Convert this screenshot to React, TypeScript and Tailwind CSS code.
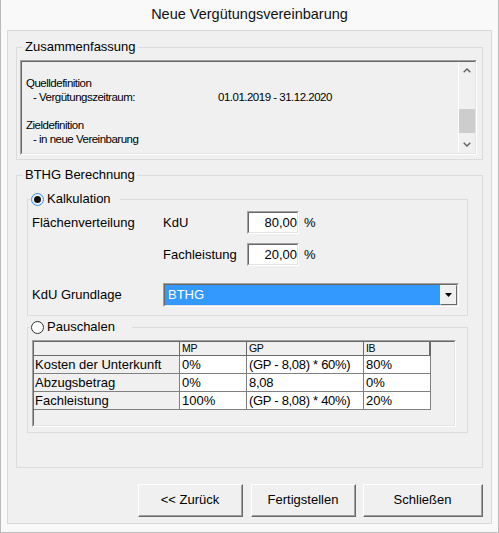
import React from "react";

const Sunken = ({
  className = "",
  innerClassName = "",
  children,
}: {
  className?: string;
  innerClassName?: string;
  children?: React.ReactNode;
}) => (
  <div
    className={
      "border-t border-l border-b border-r border-t-[#a0a0a0] border-l-[#a0a0a0] border-b-white border-r-white " +
      className
    }
  >
    <div
      className={
        "h-full border-t border-l border-b border-r border-t-[#696969] border-l-[#696969] border-b-[#e3e3e3] border-r-[#e3e3e3] " +
        innerClassName
      }
    >
      {children}
    </div>
  </div>
);

const Btn = ({ className = "", children }: { className?: string; children: React.ReactNode }) => (
  <div
    className={
      "h-[33px] border-t border-l border-b border-r border-t-white border-l-white border-b-[#696969] border-r-[#696969] " +
      className
    }
  >
    <div className="h-full border-b border-r border-b-[#a0a0a0] border-r-[#a0a0a0] bg-[#f0f0f0] flex items-center justify-center text-[13px]">
      {children}
    </div>
  </div>
);

const Radio = ({ checked }: { checked?: boolean }) =>
  checked ? (
    <div className="w-[13px] h-[13px] rounded-full border border-[#3b8fe6] bg-white flex items-center justify-center shadow-[inset_0_0_0_1px_#d4e8fc]">
      <div className="w-[7px] h-[7px] rounded-full bg-[#111]" />
    </div>
  ) : (
    <div className="w-[13px] h-[13px] rounded-full border border-[#333333] bg-white" />
  );

const ChevUp = () => (
  <svg width="8" height="5" viewBox="0 0 8 5">
    <path d="M0.7 4.3 L4 1 L7.3 4.3" fill="none" stroke="#606060" strokeWidth="1.4" />
  </svg>
);
const ChevDown = () => (
  <svg width="8" height="5" viewBox="0 0 8 5">
    <path d="M0.7 0.7 L4 4 L7.3 0.7" fill="none" stroke="#606060" strokeWidth="1.4" />
  </svg>
);

const rows = [
  ["Kosten der Unterkunft", "0%", "(GP - 8,08) * 60%)", "80%"],
  ["Abzugsbetrag", "0%", "8,08", "0%"],
  ["Fachleistung", "100%", "(GP - 8,08) * 40%)", "20%"],
];

export default function App() {
  return (
    <div className="w-[499px] h-[533px] bg-[#f9f9f9] border-x border-b border-[#bababa] font-['Liberation_Sans',Arial,sans-serif] text-black flex flex-col">
      <div className="h-[30px] flex items-center justify-center text-[14.5px] text-[#111]">
        Neue Vergütungsvereinbarung
      </div>
      <div className="ml-[6px] w-[485px] h-[494px] bg-[#f0f0f0] border border-[#d9d9d9] flex flex-col">
        {/* Zusammenfassung */}
        <fieldset className="mx-[8px] mt-[8px] border border-[#dcdcdc] min-w-0">
          <legend className="ml-[6px] px-[2px] text-[13px] leading-[16px]">Zusammenfassung</legend>
          <div className="pl-[3px] pr-[5px] pt-[5px] pb-[4px]">
            <Sunken className="h-[95px]" innerClassName="flex bg-[#f0f0f0]">
              <div className="flex-1 pt-[14px] pl-[4px] text-[11.5px] leading-[14px] tracking-[-0.5px]">
                <div>Quelldefinition</div>
                <div className="flex pl-[7px]">
                  <span className="w-[185px]">- Vergütungszeitraum:</span>
                  <span>01.01.2019 - 31.12.2020</span>
                </div>
                <div className="h-[14px]" />
                <div>Zieldefinition</div>
                <div className="pl-[7px]">- in neue Vereinbarung</div>
              </div>
              <div className="w-[17px] border-l border-white flex flex-col">
                <div className="h-[17px] flex items-center justify-center">
                  <ChevUp />
                </div>
                <div className="flex-1 pt-[30px]">
                  <div className="h-[24px] bg-[#cdcdcd]" />
                </div>
                <div className="h-[17px] flex items-center justify-center">
                  <ChevDown />
                </div>
              </div>
            </Sunken>
          </div>
        </fieldset>

        {/* BTHG Berechnung */}
        <fieldset className="mx-[8px] mt-[7px] border border-[#dcdcdc] min-w-0">
          <legend className="ml-[6px] px-[2px] text-[13px] leading-[16px]">BTHG Berechnung</legend>
          <div className="pl-[10px] pr-[14px] pb-[34px]">
            <fieldset className="mt-[8px] border border-[#dcdcdc] min-w-0">
              <legend className="ml-[2px] w-[90px]">
                <div className="flex items-center h-[16px] pl-[1px]">
                  <Radio checked />
                  <span className="ml-[3px] text-[13px] leading-[16px]">Kalkulation</span>
                </div>
              </legend>
              <div className="pl-[4px] pt-[4px] pb-[8px] text-[13px] leading-[16px]">
                <div className="flex items-center h-[23px]">
                  <span className="w-[131px]">Flächenverteilung</span>
                  <span className="w-[84px]">KdU</span>
                  <Sunken className="w-[52px] h-[23px]" innerClassName="bg-white flex items-center justify-end">
                    80,00
                  </Sunken>
                  <span className="ml-[5px]">%</span>
                </div>
                <div className="flex items-center h-[23px] mt-[9px]">
                  <span className="w-[131px]" />
                  <span className="w-[84px]">Fachleistung</span>
                  <Sunken className="w-[52px] h-[23px]" innerClassName="bg-white flex items-center justify-end">
                    20,00
                  </Sunken>
                  <span className="ml-[5px]">%</span>
                </div>
                <div className="flex items-center h-[24px] mt-[17px]">
                  <span className="w-[131px]">KdU Grundlage</span>
                  <Sunken className="w-[296px] h-[24px]" innerClassName="flex">
                    <div className="flex-1 bg-[#3399ff] text-white flex items-center pl-[3px]">BTHG</div>
                    <div className="w-[17px] border-t border-l border-b border-r border-t-[#f4f4f4] border-l-[#f4f4f4] border-b-[#696969] border-r-[#696969] bg-[#f0f0f0] flex items-center justify-center">
                      <svg width="7" height="4" viewBox="0 0 7 4">
                        <path d="M0 0 H7 L3.5 4 Z" fill="#000" />
                      </svg>
                    </div>
                  </Sunken>
                </div>
              </div>
            </fieldset>

            <fieldset className="mt-[3px] border border-[#dcdcdc] min-w-0">
              <legend className="ml-[2px] w-[102px]">
                <div className="flex items-center h-[16px] pl-[1px]">
                  <Radio />
                  <span className="ml-[3px] text-[13px] leading-[16px]">Pauschalen</span>
                </div>
              </legend>
              <div className="pl-[4px] pt-[5px] pb-[5px]">
                <Sunken className="w-[424px] h-[87px]" innerClassName="bg-[#f0f0f0]">
                  <div className="flex h-[14px] text-[10.5px] leading-[13px] tracking-[-0.3px]">
                    <div className="w-[146px] border-r border-b border-[#696969]" />
                    <div className="w-[67px] border-r border-b border-[#696969] pl-[2px]">MP</div>
                    <div className="w-[117px] border-r border-b border-[#696969] pl-[2px]">GP</div>
                    <div className="w-[67px] border-r-2 border-b border-[#696969] pl-[2px]">IB</div>
                  </div>
                  {rows.map((r) => (
                    <div key={r[0]} className="flex h-[18px] text-[13px] leading-[17px]">
                      <div className="w-[146px] border-r border-b border-[#808080] bg-[#f0f0f0] pl-[1px]">{r[0]}</div>
                      <div className="w-[67px] border-r border-b border-[#808080] bg-white pl-[2px]">{r[1]}</div>
                      <div className="w-[117px] border-r border-b border-[#808080] bg-white pl-[2px] whitespace-nowrap tracking-[-0.3px]">
                        {r[2]}
                      </div>
                      <div className="w-[67px] border-r border-b border-[#808080] bg-white pl-[2px]">{r[3]}</div>
                    </div>
                  ))}
                </Sunken>
              </div>
            </fieldset>
          </div>
        </fieldset>

        <div className="mt-[16px] mr-[8px] flex justify-end">
          <Btn className="w-[105px]">&lt;&lt; Zurück</Btn>
          <Btn className="ml-[8px] w-[105px]">Fertigstellen</Btn>
          <Btn className="ml-[7px] w-[120px]">Schließen</Btn>
        </div>
      </div>
    </div>
  );
}
